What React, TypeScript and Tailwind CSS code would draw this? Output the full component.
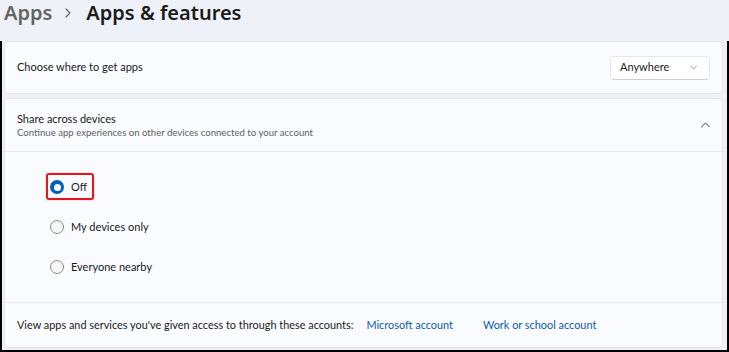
import React from "react";

const OPTIONS = [
  { id: "off", label: "Off", checked: true },
  { id: "mine", label: "My devices only", checked: false },
  { id: "everyone", label: "Everyone nearby", checked: false },
];

const Radio = ({ checked }: { checked: boolean }) =>
  checked ? (
    <span className="w-[14px] h-[14px] rounded-full bg-[#005fb8] flex items-center justify-center shrink-0">
      <span className="w-[7px] h-[7px] rounded-full bg-white" />
    </span>
  ) : (
    <span className="w-[14px] h-[14px] rounded-full border border-[#8b8b8b] bg-[#f6f6f6] shrink-0" />
  );

const Chevron = ({ up = false, size = 9 }: { up?: boolean; size?: number }) => (
  <svg
    width={size}
    height={Math.round(size / 2) + 1}
    viewBox="0 0 9 5"
    fill="none"
    stroke="currentColor"
    strokeWidth="1"
    strokeLinecap="round"
    strokeLinejoin="round"
    aria-hidden="true"
  >
    <path d={up ? "M0.5 4.5L4.5 0.5L8.5 4.5" : "M0.5 0.5L4.5 4.5L8.5 0.5"} />
  </svg>
);

export default function App() {
  return (
    <div className="w-[729px] h-[352px] overflow-hidden bg-[#eef2f8] text-[#1b1b1b] font-['Lato','Noto_Sans',sans-serif] flex flex-col">
      <header className="h-[41px] shrink-0 flex items-center pl-[4px] pb-[15px] text-[20px] font-semibold leading-none font-['Noto_Sans',sans-serif]">
        <span className="text-[#646464]">Apps</span>
        <span className="ml-[13px] mr-[15px] text-[#646464]">
          <svg width="6" height="10" viewBox="0 0 6 10" fill="none" stroke="currentColor" strokeWidth="1.2" strokeLinecap="round" strokeLinejoin="round">
            <path d="M1 1L5 5L1 9" />
          </svg>
        </span>
        <span>Apps &amp; features</span>
      </header>

      <div className="flex-1 flex flex-col border-x-2 border-b-2 border-black pl-[2px] pr-[4px] pb-[2px]">
        <div className="h-[53px] shrink-0 rounded-[4px] border border-[#e2e6ec] bg-[#f9fbfe] flex items-center justify-between pl-[12px] pr-[12px]">
          <span className="text-[11px]">Choose where to get apps</span>
          <button className="w-[100px] h-[24px] rounded-[4px] bg-white border border-[#e6e6e6] border-b-[#cfcfcf] flex items-center justify-between pl-[9px] pr-[12px] text-[11px] text-[#1b1b1b]">
            <span>Anywhere</span>
            <span className="text-[#7a7a7a]">
              <Chevron size={7} />
            </span>
          </button>
        </div>

        <div className="mt-[4px] flex-1 rounded-[4px] border border-[#e2e6ec] bg-[#f9fbfe] flex flex-col">
          <div className="h-[52px] shrink-0 flex items-center justify-between pl-[12px] pr-[12px]">
            <div className="flex flex-col">
              <span className="text-[11px] leading-[14px]">Share across devices</span>
              <span className="text-[9.6px] leading-[13px] text-[#5f5f5f]">
                Continue app experiences on other devices connected to your account
              </span>
            </div>
            <span className="text-[#3a3a3a]">
              <Chevron up />
            </span>
          </div>

          <div className="h-[151px] shrink-0 border-t border-[#e6e9ee] flex flex-col pl-[45px] pt-[25px] gap-[20px]">
            {OPTIONS.map((o) => (
              <div key={o.id} className="relative h-[20px] flex items-center gap-[7px] self-start">
                <Radio checked={o.checked} />
                <span className="text-[11px]">{o.label}</span>
                {o.checked && (
                  <span className="absolute -left-[4px] -right-[7px] -top-[4px] -bottom-[3px] rounded-[3px] border-2 border-[#e8141e] shadow-[0_0_2px_rgba(0,0,0,0.25)]" />
                )}
              </div>
            ))}
          </div>

          <div className="flex-1 border-t border-[#e6e9ee] flex items-center pl-[12px] text-[10.9px]">
            <span>View apps and services you've given access to through these accounts:</span>
            <a className="ml-[13px] text-[#0b5cad]">Microsoft account</a>
            <a className="ml-[30px] text-[#0b5cad]">Work or school account</a>
          </div>
        </div>
      </div>
    </div>
  );
}
